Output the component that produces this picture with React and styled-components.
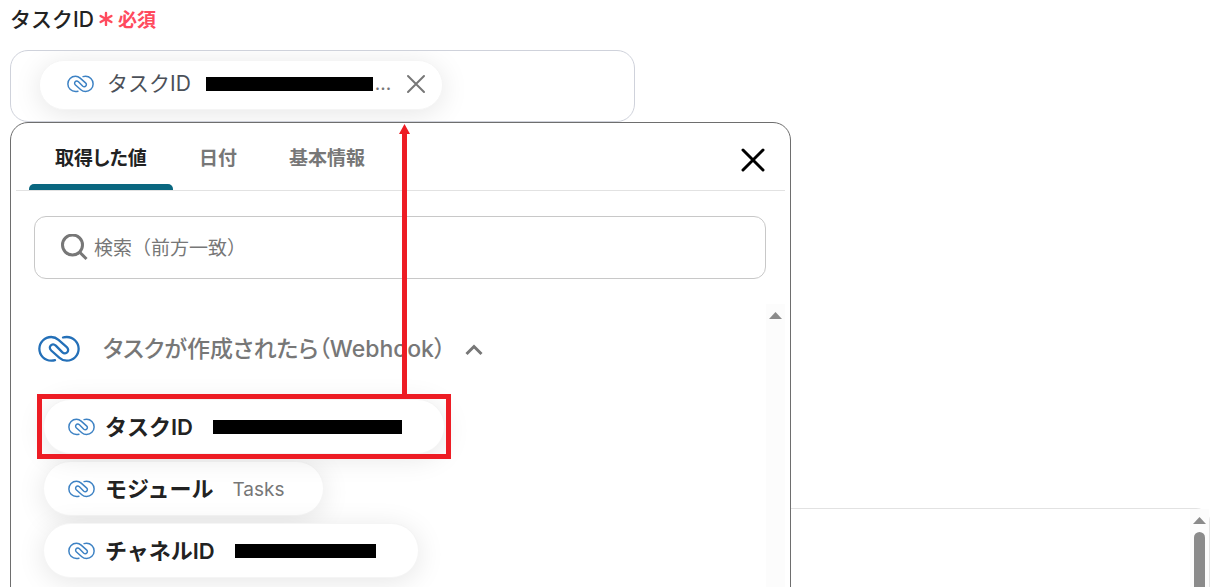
import React from "react";
import styled, { createGlobalStyle, css } from "styled-components";

const GlobalStyle = createGlobalStyle`
  *, *::before, *::after { box-sizing: border-box; }
  body {
    margin: 0;
    background: #fff;
    color: #222;
    font-family: Inter, "Noto Sans CJK JP", sans-serif;
  }
  button, input { font: inherit; color: inherit; }
  button { border: 0; padding: 0; background: none; cursor: pointer; }
`;

const Page = styled.main`
  display: flex;
  flex-direction: column;
  height: 100vh;
  overflow: hidden;
  padding: 4px 6px 0 10px;
`;

const FieldLabel = styled.div`
  display: flex;
  align-items: center;
  gap: 5px;
  height: 28px;
  font-size: 21px;
  font-weight: 500;
`;

const Required = styled.span`
  display: flex;
  align-items: center;
  gap: 5px;
  color: #ff4a5e;
  font-size: 19px;
  font-weight: 600;
`;

const Field = styled.section`
  position: relative;
  z-index: 1;
  margin-top: 18px;
`;

const ValueBox = styled.div`
  display: flex;
  align-items: flex-start;
  width: 100%;
  max-width: 625px;
  height: 72px;
  padding: 9px 28px;
  overflow: hidden;
  border: 1px solid #cfd2db;
  border-radius: 18px;
`;

const pill = css`
  display: flex;
  align-items: center;
  width: fit-content;
  background: #fff;
  border: 1px solid #f5f5f5;
  border-radius: 28px;
  box-shadow: 0 4px 28px rgba(0, 0, 0, 0.1);
`;

const SelectedChip = styled.div`
  ${pill}
  height: 50px;
  padding: 0 11px 3px 27px;
  color: #4b5058;
  font-size: 21px;
`;

const OptionChip = styled.button`
  ${pill}
  height: 55px;
  padding: 0 ${(p) => p.$end}px 0 24px;
  font-size: 22px;
  font-weight: 600;
`;

const ChipText = styled.span`
  margin-left: ${(p) => p.$gap}px;
  padding-bottom: 3px;
  white-space: nowrap;
`;

const ChipValue = styled.span`
  margin-left: 19px;
  padding-top: 2px;
  color: #777;
  font-size: 19px;
  font-weight: 400;
`;

const Redacted = styled.span`
  width: ${(p) => p.$width}px;
  height: 14px;
  margin-left: ${(p) => p.$gap}px;
  background: #000;
`;

const Ellipsis = styled.span`
  margin: 0 10px 0 2px;
  color: #777;
  font-size: 19px;
`;

const IconButton = styled.button`
  display: flex;
  align-items: center;
  justify-content: center;
  width: 30px;
  height: 30px;
`;

const Panel = styled.div`
  position: absolute;
  top: 100%;
  left: 0;
  width: 100%;
  max-width: 781px;
  padding: 0 5px;
  background: #fff;
  border: 1px solid #6e6e6e;
  border-radius: 18px;
`;

const TabBar = styled.div`
  display: flex;
  justify-content: space-between;
  height: 68px;
  padding: 0 17px 0 13px;
  border-bottom: 1px solid #e2e2e2;
`;

const Tabs = styled.div`
  display: flex;
`;

const Tab = styled.button`
  position: relative;
  height: 67px;
  padding: 0 26px;
  color: #777;
  font-size: 19px;
  font-weight: 600;
  font-feature-settings: "palt";
  ${(p) =>
    p.$active &&
    css`
      color: #222;
      &::after {
        content: "";
        position: absolute;
        left: 0;
        right: 0;
        bottom: 0;
        height: 6px;
        border-radius: 5px 5px 0 0;
        background: #0a6780;
      }
    `}
`;

const CloseSlot = styled.div`
  display: flex;
  align-items: center;
  padding-top: 7px;
`;

const SearchBox = styled.label`
  display: flex;
  align-items: center;
  gap: 6px;
  height: 63px;
  margin: 25px 19px 0 18px;
  padding: 0 25px;
  border: 1px solid #c8c8c8;
  border-radius: 12px;
`;

const SearchInput = styled.input`
  flex: 1;
  border: 0;
  outline: 0;
  padding: 2px 0 0;
  background: none;
  font-size: 19px;
  &::placeholder { color: #777; opacity: 1; }
`;

const Results = styled.div`
  display: flex;
  justify-content: space-between;
  margin-top: 25px;
`;

const ResultsBody = styled.div`
  flex: 1;
  padding: 28px 0 28px 22px;
`;

const GroupButton = styled.button`
  display: flex;
  align-items: center;
  height: 34px;
  color: #777;
  font-size: 23px;
  font-weight: 500;
`;

const GroupTitle = styled.span`
  margin: 0 20px 0 23px;
  padding-bottom: 4px;
  font-feature-settings: "palt";
  white-space: nowrap;
`;

const Chevron = styled.svg`
  margin-top: 2px;
`;

const ChipList = styled.div`
  display: flex;
  flex-direction: column;
  gap: 7px;
  padding: 33px 0 0 5px;
`;

const Highlighted = styled.div`
  position: relative;
  width: fit-content;
  &::after {
    content: "";
    position: absolute;
    inset: -5px -6px;
    border: 5px solid #ed1c24;
    pointer-events: none;
  }
`;

const Track = styled.div`
  display: flex;
  flex-direction: column;
  align-items: center;
  gap: 8px;
  width: 19px;
  padding-top: 8px;
  background: #fcfcfc;
`;

const Thumb = styled.div`
  flex: 1;
  width: 11px;
  border-radius: 6px 6px 0 0;
  background: #8b8b8b;
`;

const Arrow = styled.svg`
  position: absolute;
  left: 388px;
  top: 1px;
`;

const LowerCard = styled.section`
  display: flex;
  justify-content: flex-end;
  flex: 1;
  margin-top: 386px;
  border: 1px solid #e2e2e2;
  border-width: 1px 1px 0 0;
  border-top-right-radius: 14px;
`;

function LinkLogo({ width, height, stroke, color }) {
  return (
    <svg width={width} height={height} viewBox="0 0 42 28" fill="none" aria-hidden="true">
      <path
        d="M17 25.2C15.8 25.6 14.5 25.7 13.2 25.7A11.85 11.85 0 0 1 13.2 2C16 2 18.5 3 20.5 4.8L28.8 12.2C32.5 15.6 27.9 20.6 24.2 17.1L17.8 10.6C14.1 7.1 9.5 12.1 13.2 15.5L21.5 22.9C23.5 24.7 26 25.7 28.8 25.7A11.85 11.85 0 0 0 28.8 2C27.5 2 26.2 2.1 25 2.5"
        stroke={color}
        strokeWidth={stroke}
        strokeLinecap="round"
        strokeLinejoin="round"
      />
    </svg>
  );
}

const SmallLogo = () => <LinkLogo width={27} height={18} stroke={2.3} color="#3d82c4" />;

const Cross = ({ size, width, color }) => (
  <svg width={size} height={size} viewBox={`0 0 ${size} ${size}`} aria-hidden="true">
    <path
      d={`M2 2L${size - 2} ${size - 2}M${size - 2} 2L2 ${size - 2}`}
      stroke={color}
      strokeWidth={width}
      strokeLinecap="round"
    />
  </svg>
);

const ScrollUp = () => (
  <svg width="13" height="7" viewBox="0 0 13 7" aria-hidden="true">
    <path d="M0 7L6.5 0L13 7Z" fill="#8b8b8b" />
  </svg>
);

export default function App() {
  return (
    <>
      <GlobalStyle />
      <Page>
        <FieldLabel>
          <span id="task-id">タスクID</span>
          <Required>
            <svg width="14" height="16" viewBox="0 0 14 16" aria-hidden="true">
              <path d="M7 3V15M1.6 6L12.4 12M12.4 6L1.6 12" stroke="#ff4a5e" strokeWidth="2.4" strokeLinecap="round" />
            </svg>
            必須
          </Required>
        </FieldLabel>
        <Field aria-labelledby="task-id">
          <ValueBox>
            <SelectedChip>
              <SmallLogo />
              <ChipText $gap={13}>タスクID</ChipText>
              <Redacted $width={167} $gap={15} />
              <Ellipsis>...</Ellipsis>
              <IconButton aria-label="削除">
                <Cross size={20} width={2} color="#777" />
              </IconButton>
            </SelectedChip>
          </ValueBox>
          <Panel>
            <TabBar>
              <Tabs role="tablist">
                <Tab role="tab" aria-selected="true" $active>取得した値</Tab>
                <Tab role="tab" aria-selected="false">日付</Tab>
                <Tab role="tab" aria-selected="false">基本情報</Tab>
              </Tabs>
              <CloseSlot>
                <IconButton aria-label="閉じる">
                  <Cross size={24} width={3} color="#000" />
                </IconButton>
              </CloseSlot>
            </TabBar>
            <SearchBox>
              <svg width="28" height="28" viewBox="0 0 28 28" fill="none" aria-hidden="true">
                <circle cx="12.5" cy="11" r="10" stroke="#777" strokeWidth="3" />
                <path d="M19.5 18L26.5 25" stroke="#777" strokeWidth="3" />
              </svg>
              <SearchInput type="text" aria-label="検索" placeholder="検索（前方一致）" />
            </SearchBox>
            <Results>
              <ResultsBody>
                <GroupButton aria-expanded="true">
                  <LinkLogo width={42} height={28} stroke={2.3} color="#2470b8" />
                  <GroupTitle>タスクが作成されたら（Webhook）</GroupTitle>
                  <Chevron width="18" height="12" viewBox="0 0 18 12" fill="none" aria-hidden="true">
                    <path d="M1.5 10L9 2.5L16.5 10" stroke="#777" strokeWidth="3" />
                  </Chevron>
                </GroupButton>
                <ChipList>
                  <Highlighted>
                    <OptionChip $end={42}>
                      <SmallLogo />
                      <ChipText $gap={10}>タスクID</ChipText>
                      <Redacted $width={189} $gap={20} />
                    </OptionChip>
                  </Highlighted>
                  <OptionChip $end={38}>
                    <SmallLogo />
                    <ChipText $gap={10}>モジュール</ChipText>
                    <ChipValue>Tasks</ChipValue>
                  </OptionChip>
                  <OptionChip $end={42}>
                    <SmallLogo />
                    <ChipText $gap={10}>チャネルID</ChipText>
                    <Redacted $width={141} $gap={20} />
                  </OptionChip>
                </ChipList>
              </ResultsBody>
              <Track>
                <ScrollUp />
              </Track>
            </Results>
            <Arrow width="11" height="271" viewBox="0 0 11 271" aria-hidden="true">
              <path d="M5.5 0L11 10H8V271H3V10H0Z" fill="#ed1c24" />
            </Arrow>
          </Panel>
        </Field>
        <LowerCard>
          <Track>
            <ScrollUp />
            <Thumb />
          </Track>
        </LowerCard>
      </Page>
    </>
  );
}
